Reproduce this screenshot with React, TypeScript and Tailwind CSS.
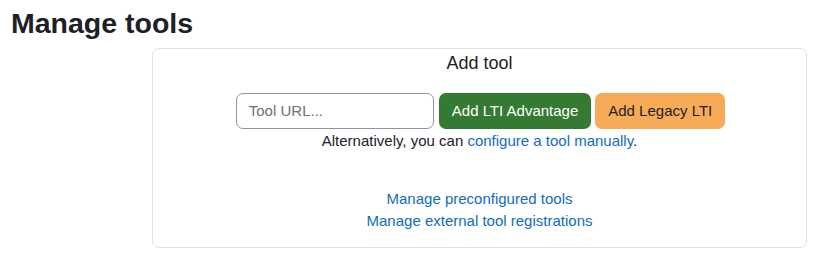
import React from 'react';

const App: React.FC = () => {
  return (
    <div className="w-[821px] h-[261px] bg-white font-['Liberation_Sans',Arial,sans-serif] text-[#1d2125]">
      <h2 className="pl-[11px] pt-[6px] text-[28.5px] font-bold leading-[1.2]">Manage tools</h2>

      <div className="ml-[152px] mr-[14px] mt-[8px] h-[200px] rounded-[7px] border border-[#dee2e6] flex flex-col items-center">
        <div className="mt-[4px] text-[18px] leading-[1.2]">Add tool</div>

        <div className="mt-[18px] ml-[2px] flex items-center">
          <input
            type="text"
            placeholder="Tool URL..."
            className="w-[198px] h-[36px] px-3 rounded-[7px] border border-[#8f959e] text-[15px] placeholder:text-[#6a737b] outline-none"
          />
          <button className="ml-[5px] h-[36px] px-[13px] rounded-[7px] bg-[#357a32] text-white text-[15px]">
            Add LTI Advantage
          </button>
          <button className="ml-[4px] h-[36px] px-[13px] rounded-[7px] bg-[#f7ab59] text-[#1d2125] text-[15px]">
            Add Legacy LTI
          </button>
        </div>

        <p className="mt-[1px] text-[15px] leading-[1.5]">
          Alternatively, you can{' '}
          <a href="#" className="text-[#0f6cbf]">configure a tool manually</a>.
        </p>

        <div className="mt-[36px] flex flex-col items-center text-[15px] leading-[1.5] text-[#0f6cbf]">
          <a href="#">Manage preconfigured tools</a>
          <a href="#" className="-mt-[1px]">Manage external tool registrations</a>
        </div>
      </div>
    </div>
  );
};

export default App;
